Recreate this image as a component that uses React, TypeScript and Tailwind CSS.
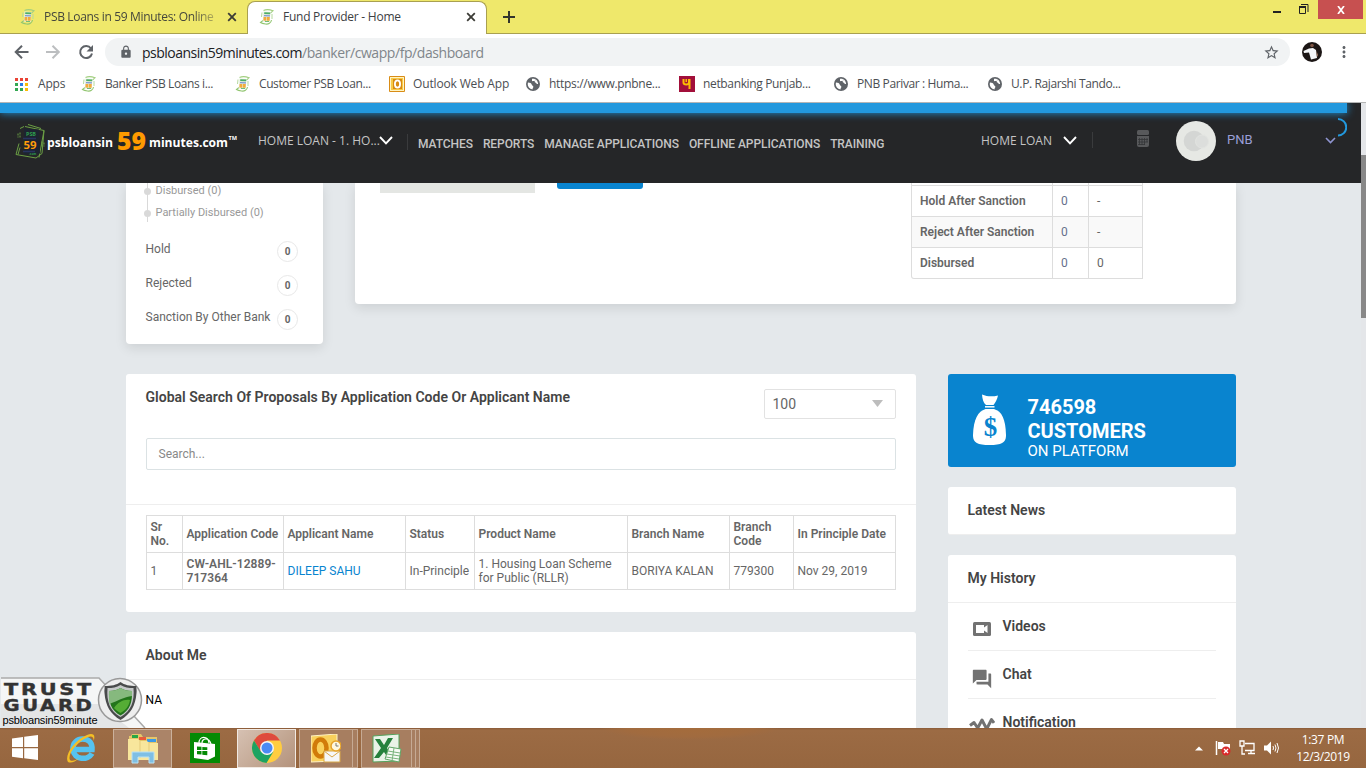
import React from "react";
import { MdForum, MdLock, MdStarBorder, MdMoreVert } from "react-icons/md";

const ui = "font-['Open_Sans','Noto_Sans',sans-serif]";

function PsbIcon({ className = "" }: { className?: string }) {
  return (
    <svg className={`shrink-0 ${className}`} width="16" height="16" viewBox="0 0 16 16" fill="none">
      <path d="M4.500 1.500C7 .3 10 .2 14 1.800L11.500 4" stroke="#a3cf80" strokeWidth="1.100" />
      <path d="M12.500 11c-.5 3-3 4.500-6 4-2-.3-3.500-.6-5-1.500L4 11.500" stroke="#93c672" strokeWidth="1.100" />
      <path d="m4.500 2.500 7 .5-.8 10-7-.5z" fill="#e4f0dc" />
      <path d="m5.300 3.200 6 .3-.1 1.800-6-.2z" fill="#4fae66" />
      <path d="m5 6 6 .2v1.300L4.900 7.200z" fill="#8194d0" />
      <path d="m4.600 7.900 2.800.1-.2 3.700-2.800-.1zM8 8h2.800l-.2 3.800H7.800z" fill="#f3ab3c" />
      <path d="M6 12.500h4" stroke="#72bd78" />
      <path d="M3 3.500 2.500 8M13 5v5" stroke="#b5d99e" />
    </svg>
  );
}

function Globe() {
  return (
    <svg className="shrink-0" width="14" height="14" viewBox="0 0 14 14">
      <circle cx="7" cy="7" r="7" fill="#5f6368" />
      <path d="M2 5.500c2 0 3.500.7 3.700 2 .2 1.300 1.800 1 1.600 2.400-.1 1-.9 1.300-.8 2.500C3.400 12 1.600 9.500 1.700 7zM6 1.800c2-.3 3.500.3 4.500 1.300C10 4 9 3.600 8.600 4.500c-.4.900 1.400.9 1.900 1.900.3.700 1 .6 1.600.5C11.900 5 11 3.500 10.500 3 9 4.200 7 3.900 6 4.300z" fill="#fff" />
    </svg>
  );
}

function Cross() {
  return (
    <svg width="10" height="10" viewBox="0 0 10 10" className="shrink-0">
      <path d="m1.200 1.200 7.600 7.600M8.800 1.200 1.200 8.800" stroke="#3c3c36" strokeWidth="1.800" />
    </svg>
  );
}

function TabStrip() {
  return (
    <div className={`relative flex h-[34px] shrink-0 border-b border-[#a9a050] bg-[#efe86b] text-[12px] text-[#45473c] ${ui}`}>
      <div className="flex w-[247px] items-center pl-5">
        <PsbIcon />
        <span className="ml-2 w-[172px] whitespace-nowrap tracking-[-0.33px] [mask-image:linear-gradient(to_right,#000_86%,rgba(0,0,0,0.3))]">PSB Loans in 59 Minutes: Online</span>
        <span className="ml-[11px]"><Cross /></span>
      </div>
      <div className="mb-[-1px] mt-px flex h-[33px] w-[240px] items-center rounded-t-lg border border-b-0 border-[#a9a050] bg-white pb-0.5 pl-[11px] text-[#3c4043]">
        <PsbIcon />
        <span className="ml-2 w-[176px] whitespace-nowrap tracking-[-0.25px]">Fund Provider - Home</span>
        <span className="ml-[7px]"><Cross /></span>
      </div>
      <svg className="ml-4 mt-[11px]" width="12" height="12" viewBox="0 0 12 12">
        <path d="M6 0v12M0 6h12" stroke="#33352c" strokeWidth="2" />
      </svg>
      <svg className="ml-auto mr-[8px] mt-[4px]" width="38" height="12" viewBox="0 0 38 12">
        <path d="M1 8h8" stroke="#222" strokeWidth="2" />
        <path d="M27.500 2.500h6v7h-6zM29 .5h7v7.500" stroke="#222" fill="none" />
        <path d="M27 3h7" stroke="#222" strokeWidth="2" />
      </svg>
      <div className="flex h-[19px] w-[45px] items-center justify-center bg-[#c75050]">
        <svg width="8" height="8" viewBox="0 0 8 8"><path d="m1 0 6 8M7 0 1 8" stroke="#fff" strokeWidth="1.700" /></svg>
      </div>
      <div className="w-[3px]" />
    </div>
  );
}

function Toolbar() {
  return (
    <div className={`flex h-9 shrink-0 items-center bg-white ${ui}`}>
      <svg className="ml-[14px]" width="80" height="16" viewBox="0 0 80 16" fill="none" strokeWidth="2">
        <path d="M14.500 8H2M8 1.700 1.700 8 8 14.300" stroke="#5f6368" />
        <path d="M32 8h12.500M38.500 1.700 44.800 8l-6.300 6.300" stroke="#bcbec0" />
        <path d="M77 4.500A6 6 0 1 0 78 9.500" stroke="#5f6368" />
        <path d="M79 1v6.500h-6.500z" fill="#5f6368" />
      </svg>
      <div className="ml-[11px] flex h-7 w-[1185px] items-center rounded-full bg-[#f1f3f4] pl-[14px] text-[14px] text-[#80868b]">
        <MdLock className="size-[14px] text-[#5f6368]" />
        <span className="ml-[9px] whitespace-nowrap tracking-[-0.43px]"><span className="tracking-[-0.52px] text-[#202124]">psbloansin59minutes.com</span>/banker/cwapp/fp/dashboard</span>
        <MdStarBorder className="ml-auto mr-[10px] size-[17px] text-[#5f6368]" />
      </div>
      <svg className="ml-3" width="20" height="20" viewBox="0 0 20 20">
        <circle cx="10" cy="10" r="10" fill="#1c1615" />
        <path d="M1.500 9 7 6.500l4-.5 3 2 1 8-6 1.500-2-7-5 .5z" fill="#f4f6f8" />
        <circle cx="10" cy="3.500" r="1.800" fill="#7c5544" />
        <path d="m14.500 9 1.500 4-1 2z" fill="#a87a62" />
      </svg>
      <MdMoreVert className="ml-[13px] size-[18px] text-[#5f6368]" />
    </div>
  );
}

function Bookmark({ icon, label, className }: { icon: React.ReactNode; label: string; className: string }) {
  return (
    <div className={`flex shrink-0 items-center whitespace-nowrap ${className}`}>
      {icon}
      <span>{label}</span>
    </div>
  );
}

function Bookmarks() {
  return (
    <div className={`flex h-[33px] shrink-0 items-center border-b border-[#b4b5b5] bg-white pb-1 text-[12px] text-[#4b4e52] ${ui}`}>
      <Bookmark className="ml-[15px] w-[66px] gap-[10px] tracking-[-0.2px]" label="Apps" icon={
        <svg width="13" height="13" viewBox="0 0 13 13">
          <path d="M0 0h3v3H0zM5 0h3v3H5zM10 0h3v3h-3z" fill="#ea4335" />
          <path d="M0 5h3v3H0zM0 10h3v3H0zM5 10h3v3H5z" fill="#34a853" />
          <path d="M5 5h3v3H5z" fill="#2a7de8" />
          <path d="M10 5h3v3h-3zM10 10h3v3h-3z" fill="#fbbc05" />
        </svg>} />
      <Bookmark className="w-[154px] gap-2 tracking-[-0.4px]" label="Banker PSB Loans i..." icon={<PsbIcon />} />
      <Bookmark className="w-[154px] gap-2 tracking-[-0.4px]" label="Customer PSB Loan..." icon={<PsbIcon />} />
      <Bookmark className="w-[137px] gap-2 tracking-[-0.15px]" label="Outlook Web App" icon={
        <svg width="16" height="16" viewBox="0 0 16 16">
          <path d="M.5.500h15v15H.5z" fill="#fff4c4" stroke="#d98c16" />
          <path d="M2 2h12v12H2z" fill="#f8c944" />
          <path d="M4 3h9v10H4z" fill="#d88a10" />
          <ellipse cx="8.500" cy="8" rx="2.600" ry="3.600" fill="none" stroke="#fff" strokeWidth="1.800" />
        </svg>} />
      <Bookmark className="w-[153px] gap-[9px] tracking-[-0.31px]" label="https://www.pnbne..." icon={<Globe />} />
      <Bookmark className="w-[155px] gap-2 tracking-[-0.35px]" label="netbanking Punjab..." icon={
        <svg width="16" height="16" viewBox="0 0 16 16">
          <path d="M0 0h16v16H0z" fill="#a20f3a" />
          <path d="M4.500 3v3.500c0 2.600 5.500 2.600 5.500 0V3M10.500 3v10" stroke="#fbbc05" strokeWidth="2" fill="none" />
          <path d="M6.500 3h1.500v3H6.500z" fill="#fbbc05" />
        </svg>} />
      <Bookmark className="w-[154px] gap-[9px] tracking-[-0.38px]" label="PNB Parivar : Huma..." icon={<Globe />} />
      <Bookmark className="gap-[9px] tracking-[-0.38px]" label="U.P. Rajarshi Tando..." icon={<Globe />} />
    </div>
  );
}

function Logo() {
  return (
    <svg width="224" height="38" viewBox="0 0 224 38" className="overflow-visible font-['Open_Sans','Noto_Sans',sans-serif] font-bold">
      <g transform="translate(0 2.500)">
        <g fill="none" stroke="#6b9f44" strokeWidth="1">
          <path d="M10 3 29 7 27 30 21 34.500 1 31 4 20" />
          <path d="m13 1 13 4M5 24 3 31M29 7l-5 27M5 5l4-2" />
          <path d="M3 10v4M5 9v6M27 18v6M29 19v4" strokeDasharray="2 1" />
        </g>
        <path d="m9 5 15 1 1 24-16 1z" fill="#1d2430" />
        <text x="11" y="12" fontSize="4.500" fill="#2e9e4e" textLength="10" lengthAdjust="spacingAndGlyphs">PSB</text>
        <path d="M8 15h13M8 28h12" stroke="#28335f" strokeWidth="1.500" />
        <text x="8.500" y="25.500" fontSize="10.500" fill="#ff9c0a" textLength="13" lengthAdjust="spacingAndGlyphs">59</text>
        <text x="14" y="31" fontSize="3" fill="#2e9e4e">.com</text>
      </g>
      <text x="32" y="26" fontSize="13" fill="#fff" textLength="66" lengthAdjust="spacingAndGlyphs">psbloansin</text>
      <text x="102" y="29" fontSize="25.500" className="font-extrabold" fill="#ff9a00" textLength="29" lengthAdjust="spacingAndGlyphs">59</text>
      <text x="134" y="26" fontSize="13" fill="#fff" textLength="79" lengthAdjust="spacingAndGlyphs">minutes.com</text>
      <text x="213.500" y="18.500" fontSize="5" fill="#fff" textLength="8.500" lengthAdjust="spacingAndGlyphs">TM</text>
    </svg>
  );
}

function Chevron({ className = "" }: { className?: string }) {
  return (
    <svg className={`shrink-0 ${className}`} width="14" height="9" viewBox="0 0 14 9">
      <path d="m1 1 6 6.300L13 1" fill="none" stroke="#fff" strokeWidth="1.900" />
    </svg>
  );
}

function SiteHeader() {
  return (
    <div className="relative h-20 shrink-0 bg-[#252628] font-[Roboto,sans-serif] text-[12px] text-[#c4c4c4]">
      <div className="h-[10px] w-[1347px] bg-[#2298dd] shadow-[0_0_8px_#2298dd]" />
      <div className="flex h-[54px] items-center whitespace-nowrap">
        <div className="ml-[15px] w-[243px]"><Logo /></div>
        <span className={`w-[121px] pt-px text-[12px] ${ui}`}>HOME LOAN - 1. HO...</span>
        <Chevron />
        <span className="ml-[14px] mr-[10px] mt-1 h-4 w-px bg-[#3a3b3d]" />
        <nav className="flex w-[563px] gap-[10px] pt-[7px] font-medium tracking-[-0.07px]">
          <span>MATCHES</span><span>REPORTS</span><span>MANAGE APPLICATIONS</span><span>OFFLINE APPLICATIONS</span><span>TRAINING</span>
        </nav>
        <span className={`w-[82px] pt-px text-[12px] ${ui}`}>HOME LOAN</span>
        <Chevron />
        <span className="ml-[15px] h-4 w-px bg-[#3a3b3d]" />
        <svg className="ml-[44px] mb-[3px]" width="12" height="17" viewBox="0 0 12 17">
          <rect width="12" height="5" rx="1.500" fill="#58595b" />
          <path d="M0 6h12v9a2 2 0 0 1-2 2H2a2 2 0 0 1-2-2z" fill="#58595b" />
          <path d="M2.500 8v7M5 8v7M7.500 8v7M10 8v4M1 9.500h10M1 12h10M1 14.500h7" stroke="#343537" strokeWidth=".8" />
        </svg>
        <svg className="ml-[27px] mt-[2px]" width="40" height="40" viewBox="0 0 40 40">
          <circle cx="20" cy="20" r="20" fill="#e6e8e4" />
          <circle cx="18" cy="20" r="10.300" fill="#d4d6d4" />
          <circle cx="26" cy="20.500" r="6.500" fill="#dcdedc" stroke="#e2e4e1" />
        </svg>
        <span className="ml-[11px] w-[98px] text-[13px] text-[#9a9fd6]">PNB</span>
        <svg className="mt-px" width="11" height="8" viewBox="0 0 11 8"><path d="m1 1 4.500 4.500L10 1" fill="none" stroke="#8f94d0" strokeWidth="1.600" /></svg>
      </div>
      <svg className="absolute right-[14px] top-[15px]" width="10" height="19" viewBox="0 0 10 19"><path d="M1 1a8.200 8.200 0 0 1 0 16.500" fill="none" stroke="#2298dd" strokeWidth="2" /></svg>
    </div>
  );
}

const statuses = ["Hold", "Rejected", "Sanction By Other Bank"];
const sanctionRows = [["Hold After Sanction", "0", "-"], ["Reject After Sanction", "0", "-"], ["Disbursed", "0", "0"]];

function TopCards() {
  return (
    <div className="flex items-start gap-8">
      <div className="flex h-[161px] w-[197px] flex-col rounded-b-[4px] bg-white text-[12px] text-[#666] shadow-[0_4px_12px_rgba(0,0,0,0.10)]">
        <div className="relative ml-[21px] h-[39px] border-l border-[#d9d9d9] pl-[7.500px] text-[11px] leading-[22px] text-[#999]">
          <div className="mt-[-3px]">Disbursed (0)</div>
          <div>Partially Disbursed (0)</div>
          <i className="absolute left-[-4px] top-[5px] size-[7px] rounded-full bg-[#d9d9d9]" />
          <i className="absolute left-[-4px] top-[27px] size-[7px] rounded-full bg-[#d9d9d9]" />
        </div>
        <div className="mt-[19px] pl-[19.500px] pr-[25px]">
          {statuses.map((s) => (
            <div key={s} className="flex h-[34px] items-start justify-between whitespace-nowrap">
              <span className="leading-4">{s}</span>
              <span className="flex size-[21px] items-center justify-center rounded-full border border-[#e8e8e8] text-[10px] font-bold">0</span>
            </div>
          ))}
        </div>
      </div>
      <div className="flex h-[121px] w-[881px] items-start rounded-b-[4px] bg-white shadow-[0_4px_12px_rgba(0,0,0,0.10)]">
        <div className="ml-[25px] h-[10px] w-[155px] bg-[#e4e6e3]" />
        <div className="ml-[22px] h-[6px] w-[86px] rounded-b-[3px] bg-[#0984cf]" />
        <div className="ml-[268px] w-[232px] rounded-bl-[3px] border-x border-b border-[#ddd] text-[12px] text-[#666]">
          <div className="grid h-[2px] grid-cols-[141px_36px_1fr] [&>i]:border-r [&>i]:border-[#ddd]"><i /><i /></div>
          {sanctionRows.map(([a, b, c], i) => (
            <div key={a} className={`grid h-[31px] grid-cols-[141px_36px_1fr] items-stretch border-t border-[#ddd] leading-[30px] ${i === 1 ? "bg-[#f9f9f9]" : ""}`}>
              <span className="border-r border-[#ddd] pl-2 font-semibold">{a}</span>
              <span className="border-r border-[#ddd] pl-2 text-[#66708c]">{b}</span>
              <span className="pl-2">{c}</span>
            </div>
          ))}
        </div>
      </div>
    </div>
  );
}

const heads = ["Sr No.", "Application Code", "Applicant Name", "Status", "Product Name", "Branch Name", "Branch Code", "In Principle Date"];
const cells = ["1", "CW-AHL-12889-717364", "DILEEP SAHU", "In-Principle", "1. Housing Loan Scheme for Public (RLLR)", "BORIYA KALAN", "779300", "Nov 29, 2019"];
const cols = "grid h-[37px] grid-cols-[36px_101px_122px_69px_153px_102px_64px_102px] border-b border-[#ddd]";
const cell = "flex items-center border-r border-[#ddd] pl-[3.500px]";

function SearchCard() {
  return (
    <div className="h-[238px] rounded-[3px] bg-white">
      <div className="flex h-[64px] justify-between pl-[19.500px] pr-5 pt-[15px]">
        <h2 className="text-[14px] font-semibold leading-4 tracking-[0.015px] text-[#444]">Global Search Of Proposals By Application Code Or Applicant Name</h2>
        <div className="flex h-[30px] w-[132px] items-center justify-between rounded-[2px] border border-[#e2e2e2] pl-[7.500px] pr-3 text-[14px] text-[#666]">
          100
          <svg width="11" height="7" viewBox="0 0 11 7" className="mb-0.5"><path d="M0 0h11L5.500 7z" fill="#bdbdbd" /></svg>
        </div>
      </div>
      <div className="mx-5 flex h-8 items-center rounded-[2px] border border-[#dbe2e4] pl-[11.500px] text-[12px] text-[#888]">Search...</div>
      <div className="mt-[34px] border-t border-[#eee]" />
      <div className="mx-5 mt-[10px] border-l border-t border-[#ddd] text-[12px] leading-[14px] text-[#666]">
        <div className={cols}>
          {heads.map((h, i) => <div key={h} className={`${cell} font-semibold ${i === 0 || i === 6 ? "pr-4" : "whitespace-nowrap"}`}>{h}</div>)}
        </div>
        <div className={cols}>
          {cells.map((c, i) => <div key={c} className={`${cell} ${i === 1 ? "font-semibold tracking-[0.06px]" : ""} ${i === 2 ? "text-[#0984cf]" : ""} ${i === 4 || i === 1 ? "" : "whitespace-nowrap"}`}>{c}</div>)}
        </div>
      </div>
    </div>
  );
}

function VideoIcon() {
  return (
    <svg width="18" height="14" viewBox="0 0 18 14">
      <rect width="18" height="14" rx="1.500" fill="#727272" />
      <path d="M3 3h8v2.500L14.500 3v8L11 8.500V11H3z" fill="#fff" />
    </svg>
  );
}

function SideColumn() {
  return (
    <div className="w-72 text-[14px] font-semibold text-[#444]">
      <div className="flex h-[93px] rounded-[3px] bg-[#0984cf] pl-[25px] text-white">
        <svg className="mt-5" width="33" height="51" viewBox="0 0 33 51">
          <path d="M9 .5c5 2 10 2.500 16 1-.8 4-2.500 7-4.500 9.500H13C10.500 9 9.300 5 9 .5z" fill="#fff" />
          <path d="M12 12.800h9.500" stroke="#fff" strokeWidth="1.500" />
          <path d="M12.500 15h8.500C29 17.500 32.500 25 33 41c.2 7.500-4 10-16.500 10S-.2 48.500 0 41C.5 25 5 17.500 12.500 15z" fill="#fff" />
          <text x="17.500" y="41.500" textAnchor="middle" fontFamily="'Liberation Serif', serif" fontSize="27" fontWeight="bold" fill="#0984cf">$</text>
        </svg>
        <div className="ml-[21.500px] mt-[21px]">
          <div className="text-[20px] font-bold leading-6">746598<br />CUSTOMERS</div>
          <div className="text-[15px] font-normal leading-4">ON PLATFORM</div>
        </div>
      </div>
      <div className="mt-5 h-12 rounded-[3px] border-b border-[#eee] bg-white pl-[19.500px] leading-[46px]">Latest News</div>
      <div className="mt-5 h-[200px] rounded-t-[3px] bg-white">
        <div className="h-12 border-b border-[#eee] pl-[19.500px] leading-[46px]">My History</div>
        <div className="mx-5">
          <div className="flex h-12 items-start border-b border-[#eee] leading-[46px]"><span className="ml-[5px] mt-[19px] w-[29.500px]"><VideoIcon /></span>Videos</div>
          <div className="flex h-12 items-start border-b border-[#eee] leading-[46px]"><span className="ml-[3px] mt-[17px] w-[31.500px]"><MdForum className="size-[22px] text-[#727272]" /></span>Chat</div>
          <div className="flex h-12 items-start leading-[46px]">
            <span className="ml-[1px] mt-[18px] w-[33.500px]">
              <svg width="26" height="16" viewBox="0 0 26 16"><path d="M1 8.500 5 5.500l3.700 5.500 4.300-8 4.700 9 4.800-9.500L25 6" fill="none" stroke="#727272" strokeWidth="3" strokeLinejoin="round" /></svg>
            </span>Notification</div>
        </div>
      </div>
    </div>
  );
}

function TrustGuard() {
  return (
    <svg className="absolute bottom-0 left-0" width="146" height="51" viewBox="0 0 146 51">
      <path d="M1 1h98l46 50H1z" fill="#f5f6f6" />
      <path d="M1 27h98l30 24H1z" fill="#e4e5e6" />
      <path d="M1 1h98l46 50" fill="none" stroke="#aaa" strokeWidth="1.500" />
      <g fontFamily="'DejaVu Sans', sans-serif" fontWeight="bold" fill="#333" stroke="#333" strokeWidth=".4" fontSize="15" letterSpacing="2">
        <text x="4" y="17.500" textLength="90" lengthAdjust="spacingAndGlyphs">TRUST</text>
        <text x="3.500" y="33.500" textLength="91" lengthAdjust="spacingAndGlyphs">GUARD</text>
      </g>
      <text x="2.500" y="47" fontFamily="'Liberation Sans', sans-serif" fontSize="11" fill="#000" textLength="95">psbloansin59minute</text>
      <circle cx="120" cy="23" r="21.500" fill="#eee" stroke="#999" strokeWidth="1.500" />
      <path d="M120.500 5c4 3 9 4 16 4-.5 2 .5 4 0 7-1 13-6 21-16 27-10-6-15-14-16-27-.5-3 .5-5 0-7 7 0 12-1 16-4z" fill="#4a4b4c" />
      <path d="M120.500 8c4 2.500 8 3 13 3 1 13-2 23-13 29-11-6-14-16-13-29 5 0 9-.5 13-3z" fill="#c5c8c8" />
      <path d="M120.500 11c3 2 7 3 11.500 3 .5 11-2 19.500-11.500 24.500C111 33.500 108.500 25 109 14c4.500 0 8.500-1 11.500-3z" fill="#23751b" />
      <path d="M120.500 11c3 2 7 3 11.500 3v5c-8 1-15 5-22.500 8-.7-4-.6-8-.5-13 4.500 0 8.500-1 11.500-3z" fill="#86b97e" />
      <path d="M114 31c4-6 10-9 16-8-1 6-4 10-9.500 13-3-2-5-3-6.500-5z" fill="#55ad35" />
    </svg>
  );
}

function Taskbar() {
  return (
    <div className={`flex h-10 shrink-0 items-center bg-[radial-gradient(90px_12px_at_690px_0,#a46c3c_0,#a16b3f_70%,transparent),linear-gradient(#8a5b39_0,#9c6b44_2px,#96663f_100%)] text-white ${ui}`}>
      <svg className="ml-3" width="26" height="26" viewBox="0 0 26 26" fill="#fff">
        <path d="M0 3.500 11 2v10H0zM12.200 1.800 26 0v12H12.200zM0 13.200h11v10L0 21.700zM12.200 13.200H26V25l-13.800-1.800z" />
      </svg>
      <svg className="ml-7" width="31" height="32" viewBox="0 0 31 32">
        <path d="M26 21.500C22 28.500 8 28.500 7 17.500 6.500 10 12 7 16.500 7c7 0 10 4.500 9.500 10.500H9" fill="none" stroke="#55c3f1" strokeWidth="5.500" />
        <path d="M2 30C-2 24 8 8 21 3c6-2.500 9 0 6.500 6 .5-4-1.500-5.500-5.500-4C12 9 1 22 4 28c2 2 6 0 9-2-4 4-8 5.500-11 4z" fill="#f5be25" />
      </svg>
      <div className="ml-[16px] flex h-[39px] w-[59px] items-center justify-center border border-[#cbb19c] bg-[#ab8468]">
        <svg width="32" height="31" viewBox="0 0 32 31">
          <path d="M2 3h2l1-2h9l2 3h14v20H2z" fill="#e5c66a" />
          <path d="M5 2h6v3H5z" fill="#28a745" /><path d="M12 4h7v3h-7z" fill="#e65b3a" /><path d="M20 6h9v3h-9z" fill="#3c9ae6" />
          <path d="M1 6h10l2 2h7l2 2h9v17H1z" fill="#f8e69c" />
          <path d="M13 8v17M22 10v15" stroke="#e5cb7a" />
          <path d="M5 19h22v11h-5v-6H11v6H5z" fill="#7fbfe4" stroke="#b9e2f5" />
        </svg>
      </div>
      <svg className="ml-[18px]" width="30" height="30" viewBox="0 0 30 30">
        <path d="M0 0h30v30H0z" fill="#048a04" />
        <path d="m4 9 21 2v12.500L18 27 4 25z" fill="#fff" />
        <path d="M9 10c0-7.500 9-7.500 10 0M12 10c0-5 7-6 9 1" fill="none" stroke="#fff" strokeWidth="1.200" />
        <path d="m7 13.500 4.500.3V17H7zm5.300.4 5 .4V17h-5zM7 18h4.500v3.600L7 21.200zm5.300 0h5v4.200l-5-.5z" fill="#048a04" />
      </svg>
      <div className="ml-[17px] flex h-[39px] w-[59px] items-center justify-center border border-[#f1e9e2] bg-[linear-gradient(135deg,#d6c1b2,#b4937c)]">
        <svg width="30" height="30" viewBox="0 0 30 30">
          <circle cx="15" cy="15" r="15" fill="#ffcd40" />
          <path d="M2 7.500A15 15 0 0 1 28 7.500H15l-6.500 11z" fill="#de4b3e" />
          <path d="M2 7.500A15 15 0 0 0 14.500 30L21.500 18.500 15 22l-6.500-4z" fill="#1da362" />
          <circle cx="15" cy="15" r="7" fill="#f5f5f5" /><circle cx="15" cy="15" r="5.500" fill="#4a8af4" />
        </svg>
      </div>
      <div className="ml-[3px] flex h-[39px] w-[59px] border border-[#c6aa94] bg-[#a77e60]">
        <div className="flex w-[53px] items-center justify-center border-r border-[#c6aa94]">
          <svg width="30" height="29" viewBox="0 0 30 29">
            <path d="M0 2 26 0v27L0 28z" fill="#f9d15c" stroke="#fff3c5" />
            <ellipse cx="9.500" cy="14" rx="6" ry="8.500" fill="none" stroke="#d17b09" strokeWidth="4.500" />
            <path d="M13 17h16v11H13z" fill="#f6f7f8" stroke="#d9a848" /><path d="m13 17 8 6 8-6" fill="none" stroke="#d9a848" />
            <circle cx="25" cy="12" r="5" fill="#fff8dd" stroke="#e7a328" strokeWidth="1.500" /><path d="M25 9v3h2.500" fill="none" stroke="#777" />
          </svg>
        </div>
      </div>
      <div className="ml-[3px] flex h-[39px] w-[59px] border border-[#c6aa94] bg-[#a77e60]">
        <div className="flex w-[50px] items-center justify-center border-r border-[#c6aa94]">
          <svg width="30" height="29" viewBox="0 0 30 29">
            <path d="M1 2 27 0v27L1 28z" fill="#e9f3e7" stroke="#55a25c" />
            <path d="M3 5h5l4 6 4-7h5l-6 10 6 10h-5l-4-6-5 6H2l7-10z" fill="#25813c" />
            <path d="m17 13 12 2-2 13-14-3z" fill="#f6faf4" stroke="#5fa766" /><path d="m16 17 12 2M15 20l13 2M14 23l13 2M22 14l-2 13" stroke="#79b37d" />
          </svg>
        </div>
        <div className="w-1 border-r border-[#c6aa94]" />
      </div>
      <svg className="ml-auto mr-[17px]" width="85" height="16" viewBox="0 0 85 16">
        <path d="M0 10.500 4 6.500l4 4z" fill="#fff" />
        <path d="M21.500 1v14" stroke="#fff" strokeWidth="1.500" /><path d="M23 2h5l1 2h6v7h-6l-1-2h-5z" fill="#fff" />
        <circle cx="31" cy="11" r="4.500" fill="#d92a2a" /><path d="m29 9 4 4M33 9l-4 4" stroke="#fff" strokeWidth="1.300" />
        <path d="M50 3.500h9v7h-9M53 13.500h7M56 10v3M45 1h4v5h-4zM47 6v8h3" fill="none" stroke="#fff" strokeWidth="1.300" />
        <path d="M69 5.500h3l4-4v13l-4-4h-3z" fill="#fff" />
        <path d="M78 6q1 2 0 4M80 4.500q2 3.500 0 7M82 3q3 5 0 10" fill="none" stroke="#fff" />
      </svg>
      <div className="mr-[17px] w-[52px] whitespace-nowrap text-center text-[12px] leading-[17px] tracking-[-0.35px]"><div>1:37 PM</div><div className="-mx-2">12/3/2019</div></div>
    </div>
  );
}

export default function App() {
  return (
    <div className="flex h-[768px] w-[1366px] flex-col overflow-hidden bg-white">
      <TabStrip />
      <Toolbar />
      <Bookmarks />
      <div className="flex h-[625px] shrink-0">
        <div className="relative flex w-[1361px] flex-col overflow-hidden bg-[#e4e8eb] font-[Roboto,sans-serif]">
          <SiteHeader />
          <div className="pl-[126px]">
            <TopCards />
            <div className="mt-[30px] flex gap-8">
              <div className="w-[790px]">
                <SearchCard />
                <div className="mt-5 h-[120px] rounded-t-[3px] bg-white">
                  <h2 className="h-12 border-b border-[#eee] pl-[19.500px] text-[14px] font-semibold leading-[46px] text-[#444]">About Me</h2>
                  <p className="pl-[19.500px] text-[12px] leading-[40px] text-black">NA</p>
                </div>
              </div>
              <SideColumn />
            </div>
          </div>
          <TrustGuard />
        </div>
        <div className="w-[5px] bg-[#e4e6e9] pt-[52px]"><div className="h-[163px] bg-[#888]" /></div>
      </div>
      <Taskbar />
    </div>
  );
}
